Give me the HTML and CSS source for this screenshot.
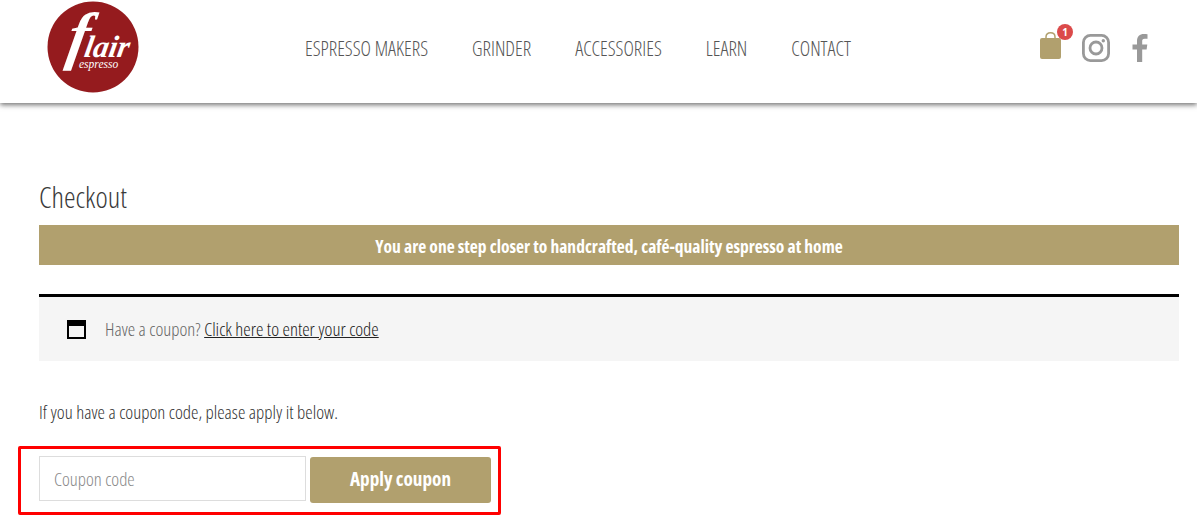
FILE: index.html
```html
<!DOCTYPE html>
<html>
<head>
  <meta charset="UTF-8">
  <title>Checkout</title>
  <link rel="stylesheet" href="styles.css">
</head>
<body>
  <header class="site-header">
    <a class="logo" href="#">
      <svg width="92" height="92" viewBox="0 0 92 92">
        <circle cx="46" cy="46" r="45.5" fill="#951b1e"/>
        <text class="logo-flair" x="18" y="56" fill="#fff" transform="translate(0 56) skewX(-10) translate(0 -56)"><tspan class="logo-f">f</tspan><tspan dx="-3">lair</tspan></text>
        <text class="logo-espresso" x="32" y="67" fill="#fff">espresso</text>
      </svg>
    </a>
    <nav class="main-nav">
      <a href="#">ESPRESSO MAKERS</a>
      <a href="#">GRINDER</a>
      <a href="#">ACCESSORIES</a>
      <a href="#">LEARN</a>
      <a href="#">CONTACT</a>
    </nav>
    <div class="header-icons">
      <a class="cart" href="#">
        <svg width="21" height="27" viewBox="0 0 21 27">
          <path d="M6 9V5C6 2.300 7.800 0.800 10.500 0.800S15 2.300 15 5V9" fill="none" stroke="#b1a06e" stroke-width="1.500"/>
          <rect x="0" y="6" width="21" height="21" rx="2" fill="#b1a06e"/>
        </svg>
        <span class="cart-count">1</span>
      </a>
      <a class="icon-link" href="#">
        <svg width="28" height="28" viewBox="0 0 28 28" fill="none" stroke="#999" stroke-width="2.800">
          <rect x="1.400" y="1.400" width="25.200" height="25.200" rx="7"/>
          <circle cx="14" cy="14" r="6"/>
          <circle cx="21.300" cy="6.700" r="1.700" fill="#999" stroke="none"/>
        </svg>
      </a>
      <a class="icon-link icon-facebook" href="#">
        <svg width="16" height="28" viewBox="0 0 16 28">
          <path d="M5 28V15.500H0.500V10.500H5V7C5 2.500 7.800 0 11.800 0C13.500 0 15 0.100 15.500 0.200V4.800H12.700C10.500 4.800 10.200 5.800 10.200 7.300V10.500H15.300L14.600 15.500H10.200V28Z" fill="#999"/>
        </svg>
      </a>
    </div>
  </header>

  <main class="content">
    <h1 class="page-title">Checkout</h1>
    <div class="promo-bar">You are one step closer to handcrafted, café-quality espresso at home</div>
    <div class="coupon-notice">
      <svg class="notice-icon" width="19" height="19" viewBox="0 0 19 19">
        <rect x="1" y="1" width="17" height="17" fill="none" stroke="#000" stroke-width="2"/>
        <rect x="1" y="1" width="17" height="5" fill="#000"/>
      </svg>
      <span class="notice-text">Have a coupon? <a href="#">Click here to enter your code</a></span>
    </div>
    <p class="coupon-hint">If you have a coupon code, please apply it below.</p>
    <form class="coupon-form">
      <input class="coupon-input" type="text" placeholder="Coupon code">
      <button class="coupon-btn" type="button">Apply coupon</button>
    </form>
  </main>
</body>
</html>
```

FILE: styles.css
```css
*, *::before {
  box-sizing: border-box;
}
html, body {
  height: 527px;
  overflow: hidden;
}
body {
  margin: 0;
  background: #fff;
  color: #4a4a4a;
  font-family: 'Open Sans', 'Liberation Sans', sans-serif;
  font-stretch: 75%;
  font-weight: 300;
}
a {
  color: inherit;
  text-decoration: none;
}
.site-header {
  display: flex;
  align-items: center;
  height: 103px;
  padding: 0 49px 7px 47px;
  background: #fff;
  box-shadow: 0 2px 5px rgba(0, 0, 0, 0.55);
}
.logo {
  display: block;
  align-self: flex-start;
  width: 92px;
  height: 92px;
  margin-top: 1px;
}
.logo-flair {
  font-family: 'Liberation Serif', serif;
  font-style: italic;
  font-weight: 700;
  font-size: 31px;
  font-stretch: normal;
}
.logo-f {
  font-size: 64px;
}
.logo-espresso {
  font-family: 'Liberation Serif', serif;
  font-style: italic;
  font-size: 11.500px;
  font-stretch: normal;
}
.main-nav {
  display: flex;
  gap: 44px;
  margin-left: 166px;
  font-size: 19.800px;
  color: #555;
  white-space: nowrap;
}
.header-icons {
  display: flex;
  align-items: center;
  gap: 21px;
  margin-left: auto;
}
.cart {
  position: relative;
  display: block;
  align-self: flex-start;
  height: 27px;
  margin-top: -2px;
}
.cart svg, .icon-link svg {
  display: block;
}
.icon-facebook {
  margin-left: 1px;
}
.cart-count {
  position: absolute;
  top: -8px;
  right: -12px;
  width: 16px;
  height: 16px;
  border-radius: 50%;
  background: #db4a4a;
  color: #fff;
  font-family: 'Open Sans', sans-serif;
  font-stretch: normal;
  font-size: 10px;
  font-weight: 700;
  line-height: 16px;
  text-align: center;
}
.content {
  padding: 76px 18px 0 39px;
}
.page-title {
  margin: 0 0 10px;
  font-size: 29.300px;
  font-weight: 300;
  line-height: 36px;
  color: #3a3a3a;
}
.promo-bar {
  height: 40px;
  background: #b1a06e;
  color: #fff;
  font-size: 17.500px;
  font-weight: 700;
  line-height: 43px;
  text-align: center;
}
.coupon-notice {
  display: flex;
  align-items: center;
  gap: 19px;
  height: 67px;
  margin-top: 29px;
  padding: 0 28px;
  border-top: 3px solid #000;
  background: #f5f5f5;
  font-size: 18.750px;
  color: #666;
}
.notice-icon {
  flex: none;
}
.notice-text {
  margin-top: -2px;
}
.coupon-notice a {
  color: #222;
  text-decoration: underline;
}
.coupon-hint {
  margin: 39px 0 0;
  font-size: 18.800px;
  line-height: 24px;
  color: #333;
}
.coupon-form {
  display: flex;
  gap: 4px;
  position: relative;
  align-items: flex-start;
  margin-top: 32px;
}
.coupon-form::before {
  content: "";
  position: absolute;
  left: -21px;
  top: -10px;
  width: 483px;
  height: 69px;
  border: 3px solid #f00;
  border-radius: 2px;
}
.coupon-input {
  width: 267px;
  height: 45px;
  padding: 0 14px;
  border: 1px solid #ddd;
  background: #fff;
  font: inherit;
  font-size: 18.700px;
  color: #444;
}
.coupon-input::placeholder {
  color: #888;
}
.coupon-btn {
  width: 181px;
  height: 46px;
  margin-top: 1px;
  padding: 0 0 4px;
  border: 0;
  border-radius: 3px;
  background: #b1a06e;
  color: #fff;
  font: inherit;
  font-size: 19.200px;
  font-weight: 700;
}
```
